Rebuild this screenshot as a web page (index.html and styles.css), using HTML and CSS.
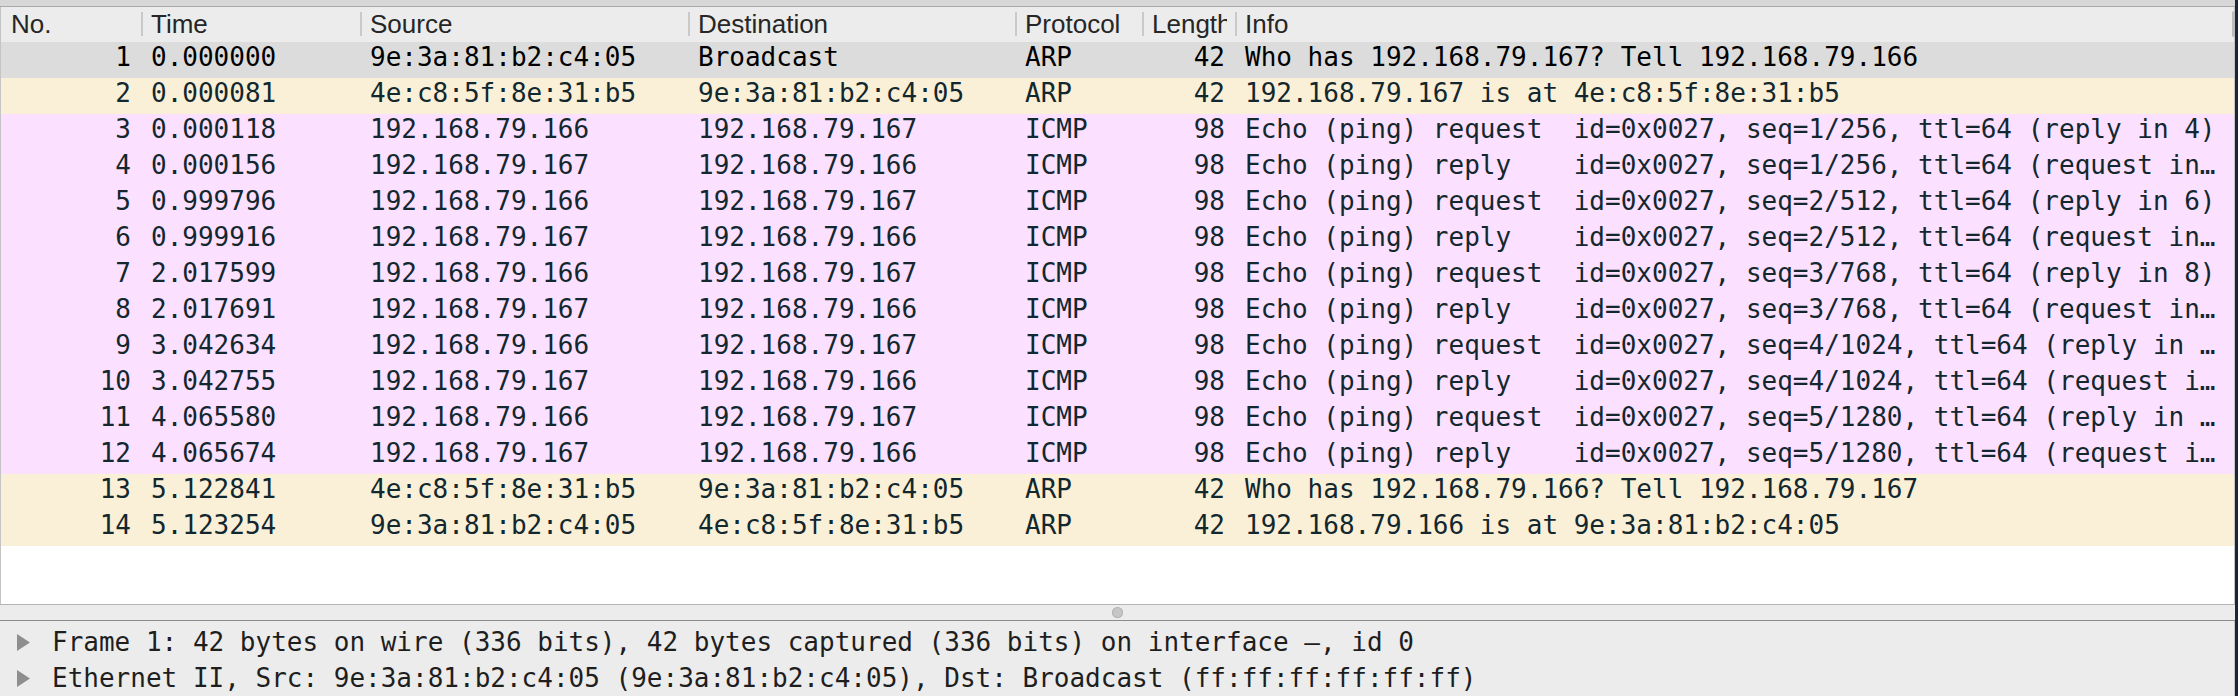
FILE: index.html
```html
<!DOCTYPE html>
<html>
<head>
<meta charset="utf-8">
<link rel="stylesheet" href="styles.css">
</head>
<body>
<div class="window">
  <div class="main">
    <div class="topband"></div>
    <div class="packet-list">
      <div class="row header">
        <div class="hcell">No.</div>
        <div class="hcell sep">Time</div>
        <div class="hcell sep">Source</div>
        <div class="hcell sep">Destination</div>
        <div class="hcell sep">Protocol</div>
        <div class="hcell sep">Length</div>
        <div class="hcell sep">Info</div>
      </div>
      <div class="row pkt selected">
        <div class="cell num">1</div><div class="cell">0.000000</div><div class="cell">9e:3a:81:b2:c4:05</div><div class="cell">Broadcast</div><div class="cell">ARP</div><div class="cell num">42</div><div class="cell info">Who has 192.168.79.167? Tell 192.168.79.166</div>
      </div>
      <div class="row pkt arp">
        <div class="cell num">2</div><div class="cell">0.000081</div><div class="cell">4e:c8:5f:8e:31:b5</div><div class="cell">9e:3a:81:b2:c4:05</div><div class="cell">ARP</div><div class="cell num">42</div><div class="cell info">192.168.79.167 is at 4e:c8:5f:8e:31:b5</div>
      </div>
      <div class="row pkt icmp">
        <div class="cell num">3</div><div class="cell">0.000118</div><div class="cell">192.168.79.166</div><div class="cell">192.168.79.167</div><div class="cell">ICMP</div><div class="cell num">98</div><div class="cell info">Echo (ping) request  id=0x0027, seq=1/256, ttl=64 (reply in 4)</div>
      </div>
      <div class="row pkt icmp">
        <div class="cell num">4</div><div class="cell">0.000156</div><div class="cell">192.168.79.167</div><div class="cell">192.168.79.166</div><div class="cell">ICMP</div><div class="cell num">98</div><div class="cell info">Echo (ping) reply    id=0x0027, seq=1/256, ttl=64 (request in…</div>
      </div>
      <div class="row pkt icmp">
        <div class="cell num">5</div><div class="cell">0.999796</div><div class="cell">192.168.79.166</div><div class="cell">192.168.79.167</div><div class="cell">ICMP</div><div class="cell num">98</div><div class="cell info">Echo (ping) request  id=0x0027, seq=2/512, ttl=64 (reply in 6)</div>
      </div>
      <div class="row pkt icmp">
        <div class="cell num">6</div><div class="cell">0.999916</div><div class="cell">192.168.79.167</div><div class="cell">192.168.79.166</div><div class="cell">ICMP</div><div class="cell num">98</div><div class="cell info">Echo (ping) reply    id=0x0027, seq=2/512, ttl=64 (request in…</div>
      </div>
      <div class="row pkt icmp">
        <div class="cell num">7</div><div class="cell">2.017599</div><div class="cell">192.168.79.166</div><div class="cell">192.168.79.167</div><div class="cell">ICMP</div><div class="cell num">98</div><div class="cell info">Echo (ping) request  id=0x0027, seq=3/768, ttl=64 (reply in 8)</div>
      </div>
      <div class="row pkt icmp">
        <div class="cell num">8</div><div class="cell">2.017691</div><div class="cell">192.168.79.167</div><div class="cell">192.168.79.166</div><div class="cell">ICMP</div><div class="cell num">98</div><div class="cell info">Echo (ping) reply    id=0x0027, seq=3/768, ttl=64 (request in…</div>
      </div>
      <div class="row pkt icmp">
        <div class="cell num">9</div><div class="cell">3.042634</div><div class="cell">192.168.79.166</div><div class="cell">192.168.79.167</div><div class="cell">ICMP</div><div class="cell num">98</div><div class="cell info">Echo (ping) request  id=0x0027, seq=4/1024, ttl=64 (reply in …</div>
      </div>
      <div class="row pkt icmp">
        <div class="cell num">10</div><div class="cell">3.042755</div><div class="cell">192.168.79.167</div><div class="cell">192.168.79.166</div><div class="cell">ICMP</div><div class="cell num">98</div><div class="cell info">Echo (ping) reply    id=0x0027, seq=4/1024, ttl=64 (request i…</div>
      </div>
      <div class="row pkt icmp">
        <div class="cell num">11</div><div class="cell">4.065580</div><div class="cell">192.168.79.166</div><div class="cell">192.168.79.167</div><div class="cell">ICMP</div><div class="cell num">98</div><div class="cell info">Echo (ping) request  id=0x0027, seq=5/1280, ttl=64 (reply in …</div>
      </div>
      <div class="row pkt icmp">
        <div class="cell num">12</div><div class="cell">4.065674</div><div class="cell">192.168.79.167</div><div class="cell">192.168.79.166</div><div class="cell">ICMP</div><div class="cell num">98</div><div class="cell info">Echo (ping) reply    id=0x0027, seq=5/1280, ttl=64 (request i…</div>
      </div>
      <div class="row pkt arp">
        <div class="cell num">13</div><div class="cell">5.122841</div><div class="cell">4e:c8:5f:8e:31:b5</div><div class="cell">9e:3a:81:b2:c4:05</div><div class="cell">ARP</div><div class="cell num">42</div><div class="cell info">Who has 192.168.79.166? Tell 192.168.79.167</div>
      </div>
      <div class="row pkt arp">
        <div class="cell num">14</div><div class="cell">5.123254</div><div class="cell">9e:3a:81:b2:c4:05</div><div class="cell">4e:c8:5f:8e:31:b5</div><div class="cell">ARP</div><div class="cell num">42</div><div class="cell info">192.168.79.166 is at 9e:3a:81:b2:c4:05</div>
      </div>
      <div class="scroll-thumb"></div>
    </div>
    <div class="splitter"><span class="handle"></span></div>
    <div class="details">
      <div class="dline"><svg class="tri" width="13" height="17" viewBox="0 0 13 17"><polygon points="0,0 13,8.5 0,17" fill="#8e8e8e"/></svg><span class="dtext">Frame 1: 42 bytes on wire (336 bits), 42 bytes captured (336 bits) on interface –, id 0</span></div>
      <div class="dline"><svg class="tri" width="13" height="17" viewBox="0 0 13 17"><polygon points="0,0 13,8.5 0,17" fill="#8e8e8e"/></svg><span class="dtext">Ethernet II, Src: 9e:3a:81:b2:c4:05 (9e:3a:81:b2:c4:05), Dst: Broadcast (ff:ff:ff:ff:ff:ff)</span></div>
    </div>
  </div>
  <div class="edge"></div>
</div>
</body>
</html>
```

FILE: styles.css
```css
html, body {
  margin: 0;
  padding: 0;
  height: 696px;
  overflow: hidden;
  background: #ececec;
}

.window {
  display: flex;
  width: 2238px;
  height: 696px;
}

.main {
  width: 2235px;
  display: flex;
  flex-direction: column;
  background: #ececec;
}

.edge {
  width: 3px;
  background: #1d2434;
}

.topband {
  height: 6px;
  background: #d7d7d7;
  border-bottom: 1px solid #a9a9a9;
}

.packet-list {
  position: relative;
  height: 603px;
  background: #ffffff;
  border-left: 1px solid #c4c4c4;
  border-right: 1px solid #c4c4c4;
}

.row {
  display: grid;
  grid-template-columns: 140px 219px 328px 327px 127px 93px 1fr;
}

.header {
  height: 35px;
  background: #ececec;
}

.hcell {
  position: relative;
  font-family: "Liberation Sans", Arial, sans-serif;
  font-size: 26px;
  line-height: 35px;
  color: #262626;
  padding: 0 8px 0 10px;
  white-space: nowrap;
  overflow: hidden;
  clip-path: inset(0 8px 0 0);
}

.hcell.sep::before {
  content: "";
  position: absolute;
  left: 0;
  top: 5px;
  width: 2px;
  height: 24px;
  background: #c9c9c9;
}

.pkt {
  height: 36px;
  font-family: "DejaVu Sans Mono", "Liberation Mono", monospace;
  font-size: 26px;
  line-height: 30px;
  color: #12272e;
}

.pkt.selected {
  background: #dcdcdc;
  color: #000000;
}

.pkt.arp {
  background: #faf0d7;
}

.pkt.icmp {
  background: #fce0ff;
}

.cell {
  padding: 0 10px;
  white-space: pre;
  overflow: hidden;
}

.cell.num {
  text-align: right;
}

.scroll-thumb {
  position: absolute;
  right: -1px;
  top: 4px;
  width: 3px;
  height: 26px;
  border-radius: 2px;
  background: #bdbdbd;
}

.splitter {
  position: relative;
  height: 15px;
  border-top: 1px solid #b4b4b4;
  border-bottom: 1px solid #8c8c8c;
  background: #ececec;
  display: flex;
  justify-content: center;
  align-items: center;
}

.handle {
  width: 11px;
  height: 11px;
  border-radius: 50%;
  background: #c6c6c6;
  box-shadow: inset 0 0 0 1px #b4b4b4;
}

.details {
  flex: 1;
  padding-top: 3px;
  background: #ececec;
  border-right: 1px solid #c4c4c4;
}

.dline {
  display: flex;
  align-items: center;
  height: 36px;
  font-family: "DejaVu Sans Mono", "Liberation Mono", monospace;
  font-size: 26px;
  color: #1e1e1e;
  white-space: pre;
}

.tri {
  margin-left: 17px;
  margin-right: 22px;
  flex: none;
}
```
